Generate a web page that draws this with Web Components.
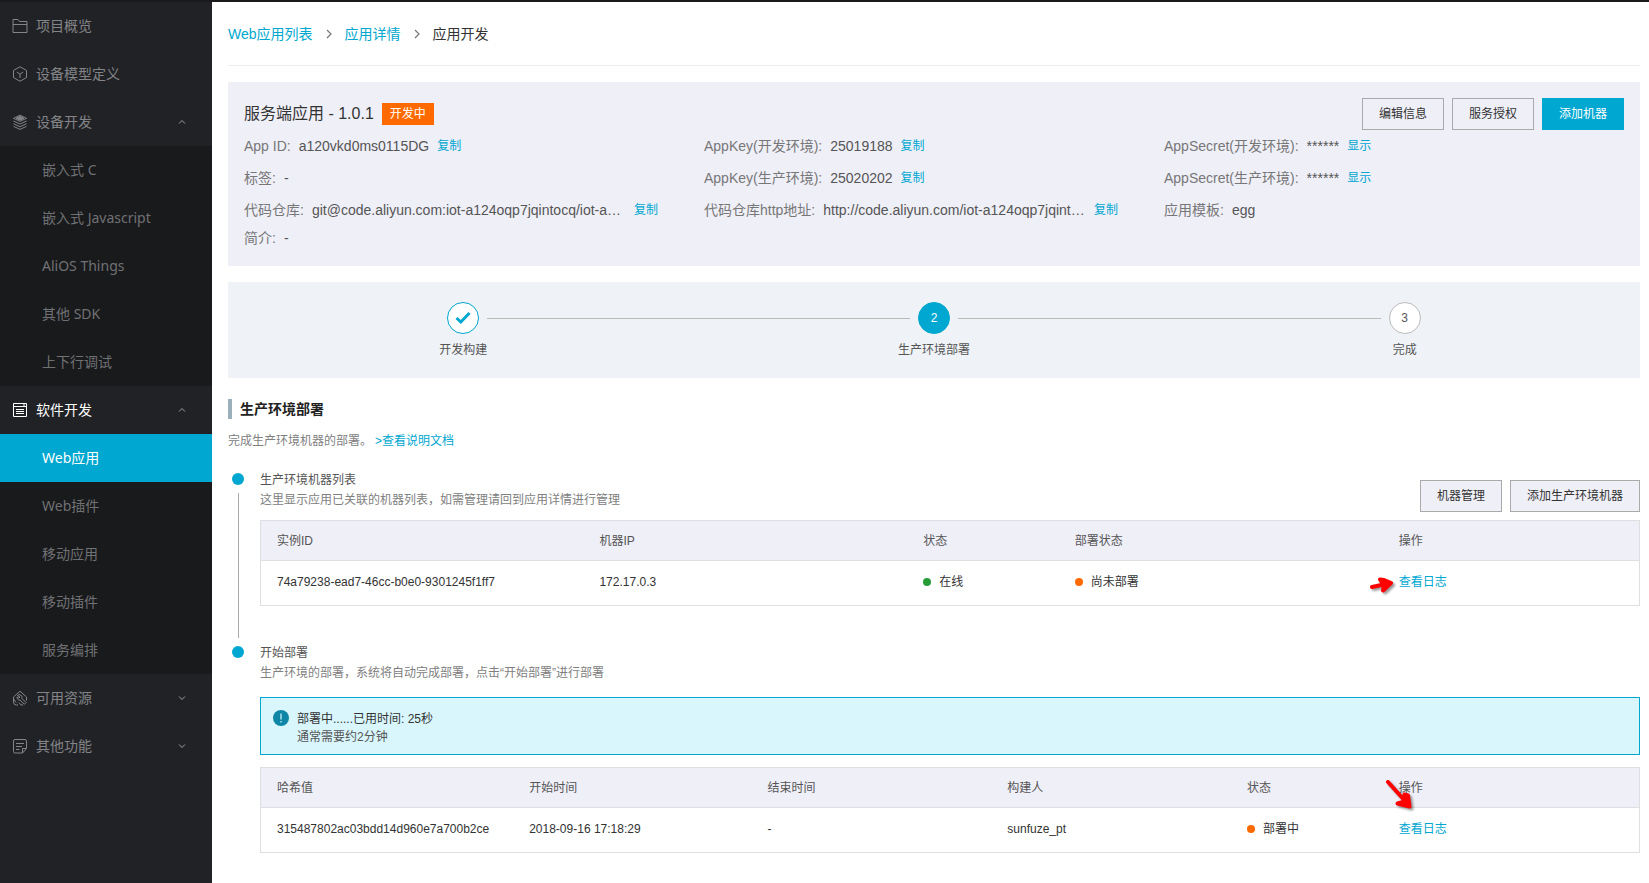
<!DOCTYPE html>
<html lang="zh-CN">
<head>
<meta charset="utf-8">
<title>应用开发</title>
<style>
  html, body { margin: 0; }
  body {
    font-family: "Liberation Sans", "Noto Sans CJK SC", sans-serif;
    font-size: 12px;
    line-height: 20px;
    color: #333;
    background: #fff;
    --brand: #00a7d0;
    --panel: #efeff8;
    --line: #dedfe0;
  }
</style>
</head>
<body>
<app-shell>
  <side-nav slot="nav">
    <nav-entry icon="folder">项目概览</nav-entry>
    <nav-entry icon="cube">设备模型定义</nav-entry>
    <nav-group icon="layers" label="设备开发" open>
      <nav-sub>嵌入式 C</nav-sub>
      <nav-sub>嵌入式 Javascript</nav-sub>
      <nav-sub>AliOS Things</nav-sub>
      <nav-sub>其他 SDK</nav-sub>
      <nav-sub>上下行调试</nav-sub>
    </nav-group>
    <nav-group icon="list" label="软件开发" open current>
      <nav-sub current>Web应用</nav-sub>
      <nav-sub>Web插件</nav-sub>
      <nav-sub>移动应用</nav-sub>
      <nav-sub>移动插件</nav-sub>
      <nav-sub>服务编排</nav-sub>
    </nav-group>
    <nav-group icon="tools" label="可用资源"></nav-group>
    <nav-group icon="note" label="其他功能"></nav-group>
  </side-nav>

  <bread-crumb></bread-crumb>

  <app-summary>
    <span slot="title">服务端应用 - 1.0.1</span>
    <span slot="badge">开发中</span>
    <app-button slot="actions">编辑信息</app-button>
    <app-button slot="actions">服务授权</app-button>
    <app-button slot="actions" primary>添加机器</app-button>
    <info-field label="App ID:" action="复制">a120vkd0ms0115DG</info-field>
    <info-field label="AppKey(开发环境):" action="复制">25019188</info-field>
    <info-field label="AppSecret(开发环境):" action="显示">******</info-field>
    <info-field label="标签:">-</info-field>
    <info-field label="AppKey(生产环境):" action="复制">25020202</info-field>
    <info-field label="AppSecret(生产环境):" action="显示">******</info-field>
    <info-field label="代码仓库:" action="复制" wide>git@code.aliyun.com:iot-a124oqp7jqintocq/iot-a…</info-field>
    <info-field label="代码仓库http地址:" action="复制" wide>http://code.aliyun.com/iot-a124oqp7jqint…</info-field>
    <info-field label="应用模板:">egg</info-field>
    <info-field label="简介:">-</info-field>
  </app-summary>

  <step-bar>
    <step-node state="done">开发构建</step-node>
    <step-node state="active" number="2">生产环境部署</step-node>
    <step-node state="wait" number="3">完成</step-node>
  </step-bar>

  <section-title>
    生产环境部署
    <span slot="desc">完成生产环境机器的部署。</span>
    <text-link slot="link">&gt;查看说明文档</text-link>
  </section-title>

  <time-step heading="生产环境机器列表" desc="这里显示应用已关联的机器列表，如需管理请回到应用详情进行管理">
    <app-button slot="actions">机器管理</app-button>
    <app-button slot="actions">添加生产环境机器</app-button>
    <machine-table></machine-table>
  </time-step>

  <time-step heading="开始部署" desc="生产环境的部署，系统将自动完成部署，点击“开始部署”进行部署" last>
    <notice-box>部署中......已用时间: 25秒<span slot="desc">通常需要约2分钟</span></notice-box>
    <deploy-table></deploy-table>
  </time-step>
</app-shell>

<script>
const ICONS = {
  folder: '<path d="M1 14.500h14v-11H7.500l-1.500-2H1zM1 6.500h14"/>',
  cube: '<path d="M8 .8l6.500 3.600v7.200L8 15.200l-6.500-3.600V4.400zM8 12V8.200M4.800 6l3.200 2.200L11.200 6"/>',
  layers: '<path d="M8 1.200l6.500 3.100L8 7.400 1.500 4.300z"/><path d="M8 2.400l4 1.900-4 1.900-4-1.900z" fill="currentColor"/><path d="M1.500 7L8 10.100 14.500 7M1.500 9.700L8 12.800l6.500-3.100M1.500 12.300L8 15.400l6.500-3.100"/>',
  list: '<path d="M1.500 1.500h13v13h-13zM1.500 4.500h13M4 7.500h8M4 9.500h8M4 11.500h8M11 3h2"/>',
  tools: '<path d="M6 15H4.500a3 3 0 0 1-3-3V7L8 1.200 14.500 7v3.500M4.200 12.500L1.500 9M5.500 5.500a2.600 2.600 0 0 1 4.300 2.800l4.200 4.200-1.600 1.800-4.300-4.200a2.600 2.600 0 0 1-3-3.200L6.800 8.200 8 7z"/><path d="M7 12.500L9 15h2"/>',
  note: '<path d="M14.500 10V3a1.500 1.500 0 0 0-1.500-1.500H3A1.500 1.500 0 0 0 1.500 3v10.500A1.500 1.500 0 0 0 3 15h7.500l4-4.500h-4V15M4 5.500h8M4 8.500h6M4 11.500h3.500"/>'
};
const icon = name => `<svg class="icon" viewBox="0 0 16 16" width="16" height="16" fill="none" stroke="currentColor" aria-hidden="true">${ICONS[name]}</svg>`;

function define(name, render) {
  customElements.define(name, class extends HTMLElement {
    constructor() { super(); this.attachShadow({ mode: 'open' }); }
    connectedCallback() {
      if (this.shadowRoot.childNodes.length) return;
      const t = document.createElement('template');
      t.innerHTML = render(this);
      this.shadowRoot.append(t.content.cloneNode(true));
    }
  });
}

define('app-shell', () => `
  <style>
    :host { display: grid; grid-template-columns: 212px minmax(0, 1fr); box-sizing: border-box; min-height: 100vh; border-top: 2px solid #1a1a1c; }
    main { padding: 0 9px 24px 16px; }
  </style>
  <slot name="nav"></slot>
  <main><slot></slot></main>`);

define('side-nav', () => `
  <style>:host { display: block; background: #212226; color: #838487; font-size: 14px; }</style>
  <nav><slot></slot></nav>`);

const ENTRY = `
    a, button { display: flex; align-items: center; gap: 8px; width: 100%; height: 48px; box-sizing: border-box; padding: 0 26px 0 12px; border: 0; background: none; color: inherit; font: inherit; text-align: left; text-decoration: none; }
    .icon { flex: none; }
    .text { flex: 1; }`;

define('nav-entry', el => `
  <style>:host { display: block; } ${ENTRY}</style>
  <a href="#">${icon(el.getAttribute('icon'))}<span class="text"><slot></slot></span></a>`);

define('nav-group', el => `
  <style>
    :host { display: block; } ${ENTRY}
    :host([current]) button { color: #fff; }
    .arrow { color: #a0a1a4; }
    .subs { background: #191a1c; }
  </style>
  <button type="button" aria-expanded="${el.hasAttribute('open')}">
    ${icon(el.getAttribute('icon'))}<span class="text">${el.getAttribute('label')}</span>
    <svg class="arrow" width="8" height="8" viewBox="0 0 8 8" fill="none" stroke="currentColor"><path d="${el.hasAttribute('open') ? 'M1 5.500l3-3 3 3' : 'M1 2.500l3 3 3-3'}"/></svg>
  </button>
  <div class="subs"><slot></slot></div>`);

define('nav-sub', () => `
  <style>
    :host { display: block; font-family: "Noto Sans", "Noto Sans CJK SC", sans-serif; color: #707174; }
    :host([current]) { background: var(--brand); color: #fff; }
    a { display: block; padding-left: 42px; line-height: 48px; color: inherit; text-decoration: none; }
  </style>
  <a href="#"><slot></slot></a>`);

define('text-link', () => `
  <style>a { color: var(--brand); text-decoration: none; }</style>
  <a href="#"><slot></slot></a>`);

const SEP = '<svg width="8" height="10" viewBox="0 0 8 10" fill="none" stroke="#777" stroke-width="1.200" aria-hidden="true"><path d="M2 1l4 4-4 4"/></svg>';
define('bread-crumb', () => `
  <style>
    :host { display: block; font-size: 14px; border-bottom: 1px solid #ebecec; margin-bottom: 16px; }
    nav { display: flex; align-items: center; gap: 12px; height: 63px; }
  </style>
  <nav><text-link>Web应用列表</text-link>${SEP}<text-link>应用详情</text-link>${SEP}<span>应用开发</span></nav>`);

define('app-button', () => `
  <style>
    :host { display: block; }
    button { display: block; height: 32px; padding: 0 16px; border: 1px solid #aaa; background: var(--panel); color: #333; font: inherit; white-space: nowrap; }
    :host([primary]) button { border-color: var(--brand); background: var(--brand); color: #fff; }
  </style>
  <button type="button"><slot></slot></button>`);

define('app-summary', () => `
  <style>
    :host { display: block; padding: 16px; margin-bottom: 16px; background: var(--panel); }
    header { display: flex; align-items: center; gap: 8px; height: 32px; }
    h1 { margin: 0; font-size: 16px; font-weight: 400; }
    .badge { padding: 0 8px; line-height: 22px; background: #ff6a00; color: #fff; }
    .actions { display: flex; gap: 8px; margin-left: auto; }
    .grid { display: grid; grid-template-columns: repeat(3, minmax(0, 1fr)); grid-template-rows: 32px 32px 32px 24px; }
  </style>
  <header>
    <h1><slot name="title"></slot></h1>
    <span class="badge"><slot name="badge"></slot></span>
    <div class="actions"><slot name="actions"></slot></div>
  </header>
  <div class="grid"><slot></slot></div>`);

define('info-field', el => `
  <style>
    :host { display: flex; align-items: center; gap: 8px; width: 90%; font-size: 14px; white-space: nowrap; }
    .label { color: #777; }
    .value { color: #555; overflow: hidden; text-overflow: ellipsis; }
    :host([wide]) .value { flex: 1; }
    text-link { font-size: 12px; }
  </style>
  <span class="label">${el.getAttribute('label')}</span>
  <span class="value"><slot></slot></span>
  ${el.hasAttribute('action') ? `<text-link>${el.getAttribute('action')}</text-link>` : ''}`);

define('step-bar', () => `
  <style>:host { display: grid; grid-template-columns: repeat(3, 1fr); padding: 20px 0 18px; background: #eff2f7; }</style>
  <slot></slot>`);

define('step-node', el => `
  <style>
    :host { display: block; text-align: center; color: #555; }
    .row { display: flex; align-items: center; gap: 8px; margin-bottom: 6px; }
    .row::before, .row::after { content: ""; flex: 1; height: 1px; background: #bbb; }
    :host(:first-child) .row::before, :host(:last-child) .row::after { background: none; }
    .mark { display: flex; align-items: center; justify-content: center; box-sizing: border-box; width: 32px; height: 32px; border: 1px solid #bbb; border-radius: 50%; background: #fff; }
    :host([state="done"]) .mark { border-color: var(--brand); }
    :host([state="active"]) .mark { border-color: var(--brand); background: var(--brand); color: #fff; }
  </style>
  <div class="row"><span class="mark">${el.getAttribute('number') || '<svg width="16" height="14" viewBox="0 0 16 14" fill="none" stroke="#00a7d0" stroke-width="3"><path d="M1.500 7l4.300 4L14.500 2"/></svg>'}</span></div>
  <slot></slot>`);

define('section-title', () => `
  <style>
    :host { display: block; padding-top: 21px; }
    h2 { margin: 0; padding-left: 8px; border-left: 4px solid #9bb0ba; font-size: 14px; line-height: 20px; color: #222; }
    p { display: flex; gap: 3px; margin: 12px 0 19px; color: #808080; }
  </style>
  <h2><slot></slot></h2>
  <p><slot name="desc"></slot><slot name="link"></slot></p>`);

define('time-step', el => `
  <style>
    :host { display: grid; grid-template-columns: 20px minmax(0, 1fr); column-gap: 12px; }
    .rail { display: flex; flex-direction: column; align-items: center; gap: 8px; padding: 3px 0 5px; }
    .rail::before { content: ""; width: 12px; height: 12px; border-radius: 50%; background: var(--brand); }
    :host(:not([last])) .rail::after { content: ""; flex: 1; width: 1px; background: #aaa; }
    :host(:not([last])) .body { padding-bottom: 37px; }
    .head { display: flex; justify-content: space-between; padding-bottom: 8px; }
    :host([last]) .head { padding-bottom: 14px; }
    h3 { margin: 0; font-size: 12px; font-weight: 400; color: #555; }
    p { margin: 0; color: #808080; }
    .actions { display: flex; gap: 8px; }
    :host(:not([last])) .actions { padding-top: 10px; }
  </style>
  <div class="rail"></div>
  <div class="body">
    <div class="head">
      <div><h3>${el.getAttribute('heading')}</h3><p>${el.getAttribute('desc')}</p></div>
      <div class="actions"><slot name="actions"></slot></div>
    </div>
    <slot></slot>
  </div>`);

define('notice-box', () => `
  <style>
    :host { display: flex; gap: 8px; padding: 12px 12px 8px; margin-bottom: 12px; border: 1px solid var(--brand); background: #d9f6fd; line-height: 18px; }
    svg { flex: none; }
    .desc { color: #555; }
  </style>
  <svg width="16" height="16" viewBox="0 0 16 16" aria-hidden="true"><circle cx="8" cy="8" r="8" fill="#0f86a5"/><path d="M8 3.500v6M8 11v1.500" stroke="#d9f6fd" stroke-width="1.200"/></svg>
  <div><div><slot></slot></div><div class="desc"><slot name="desc"></slot></div></div>`);

define('status-dot', () => `
  <style>
    :host { display: inline-flex; align-items: center; gap: 8px; vertical-align: top; }
    :host::before { content: ""; width: 8px; height: 8px; border-radius: 50%; background: #ff6a00; }
    :host([online])::before { background: #279b37; }
  </style>
  <slot></slot>`);

/* Red hand-drawn pointers laid over the log column. */
define('red-arrow', el => `
  <style>
    :host { position: absolute; z-index: 1; display: block; }
    svg { display: block; overflow: visible; filter: drop-shadow(2px 2px 1px rgba(0, 0, 0, .4)); }
  </style>
  ${el.hasAttribute('down')
    ? '<svg width="27" height="29" viewBox="0 0 27 29" fill="none" stroke="red" stroke-linecap="round" stroke-linejoin="round"><path d="M2 2l18 20" stroke-width="4"/><path d="M18.500 14.500v7l-7 2 12 3-1.500-11z" fill="red" stroke-width="4"/></svg>'
    : '<svg width="24" height="17" viewBox="0 0 24 17" fill="none" stroke="red" stroke-linecap="round" stroke-linejoin="round"><path d="M2 10l14-3" stroke-width="4"/><path d="M10 2.500l4 .500 7 3-8 7.500 1-5z" fill="red" stroke-width="4"/></svg>'}`);

const TABLE = `
    :host { display: block; border: 1px solid var(--line); }
    table { width: 100%; table-layout: fixed; border-collapse: separate; border-spacing: 0; }
    th, td { position: relative; padding: 0 16px; text-align: left; font-weight: 400; }
    th { height: 39px; background: var(--panel); border-bottom: 1px solid var(--line); color: #555; }
    td { height: 42px; padding-bottom: 2px; }`;

define('machine-table', () => `
  <style>${TABLE} red-arrow { left: -13px; top: 16px; }</style>
  <table>
    <colgroup><col style="width:23.4%"><col style="width:23.5%"><col style="width:11%"><col style="width:23.5%"><col></colgroup>
    <thead><tr><th>实例ID</th><th>机器IP</th><th>状态</th><th>部署状态</th><th>操作</th></tr></thead>
    <tbody><tr><td>74a79238-ead7-46cc-b0e0-9301245f1ff7</td><td>172.17.0.3</td><td><status-dot online>在线</status-dot></td><td><status-dot>尚未部署</status-dot></td><td><text-link>查看日志</text-link><red-arrow></red-arrow></td></tr></tbody>
  </table>`);

define('deploy-table', () => `
  <style>${TABLE} thead th:last-child { z-index: 1; } red-arrow { left: 3px; top: 12px; }</style>
  <table>
    <colgroup><col style="width:18.3%"><col style="width:17.3%"><col style="width:17.4%"><col style="width:17.4%"><col style="width:11%"><col></colgroup>
    <thead><tr><th>哈希值</th><th>开始时间</th><th>结束时间</th><th>构建人</th><th>状态</th><th>操作<red-arrow down></red-arrow></th></tr></thead>
    <tbody><tr><td>315487802ac03bdd14d960e7a700b2ce</td><td>2018-09-16 17:18:29</td><td>-</td><td>sunfuze_pt</td><td><status-dot>部署中</status-dot></td><td><text-link>查看日志</text-link></td></tr></tbody>
  </table>`);
</script>
</body>
</html>
